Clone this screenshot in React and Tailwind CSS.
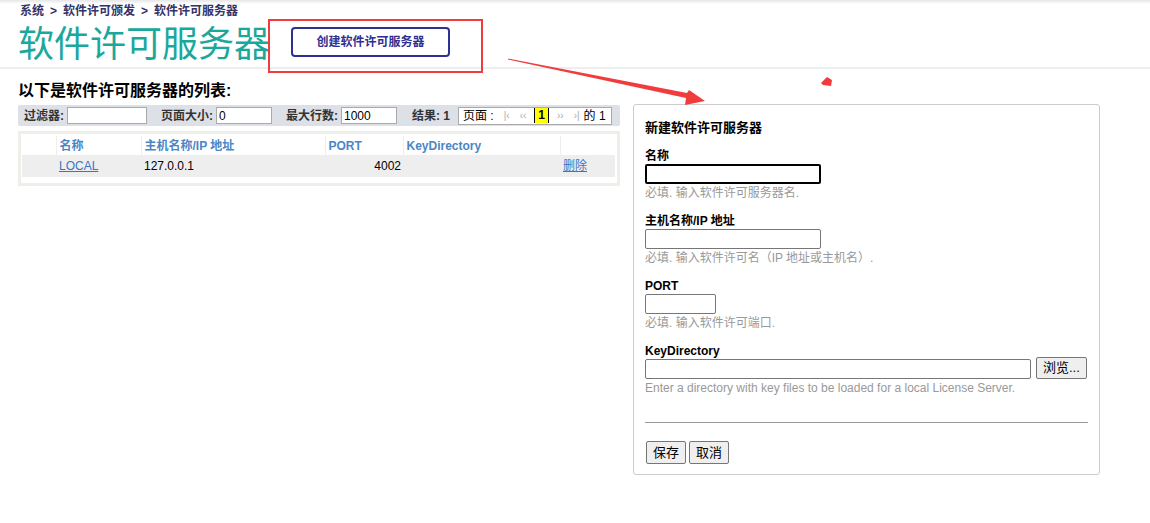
import React from 'react';

const font = { fontFamily: '"Liberation Sans", "Noto Sans CJK SC", Arial, sans-serif' };

function Field({ label, help, inputClass, focused, children }) {
  return (
    <div className="mt-[13px]">
      <div className="text-[12px] font-bold text-black leading-[15px]">{label}</div>
      <div className="flex items-center gap-[5px]">
        <input
          className={`h-[20px] bg-white rounded-[2px] outline-none ${
            focused ? 'border-2 border-black' : 'border border-[#767676]'
          } ${inputClass}`}
        />
        {children}
      </div>
      <div className="text-[12px] text-[#999] leading-[16px] mt-[1px]">{help}</div>
    </div>
  );
}

export default function App() {
  return (
    <div className="relative w-[1150px] h-[523px] bg-white overflow-hidden text-black" style={font}>
      {/* top shadow */}
      <div className="h-[4px] bg-gradient-to-b from-[#e6e6e6] to-white" />

      {/* header */}
      <div className="pl-[20px] h-[14px] text-[12px] font-bold text-[#333366] leading-[14px] flex">
        <span>系统</span>
        <span className="mx-[6px]">&gt;</span>
        <span>软件许可颁发</span>
        <span className="mx-[6px]">&gt;</span>
        <span>软件许可服务器</span>
      </div>
      <div className="mt-[7px] flex items-start h-[44px] pl-[18px] border-b-2 border-[#eeeeee]">
        <h1 className="text-[36px] leading-[40px] text-[#1ba89c] font-normal">软件许可服务器</h1>
        <button className="ml-[21px] mt-[2px] w-[159px] h-[30px] border-2 border-[#2e3192] rounded-[4px] text-[12px] font-bold text-[#2e3192] bg-white">
          创建软件许可服务器
        </button>
      </div>

      <div className="flex items-start">
        {/* left column */}
        <div className="pl-[18px] w-[620px]">
          <div className="mt-[12px] text-[16px] font-bold leading-[20px]">以下是软件许可服务器的列表:</div>

          {/* toolbar */}
          <div className="mt-[4px] h-[21px] bg-[#dde0e6] rounded-[2px] flex items-center text-[12px] text-[#333] pl-[6px]">
            <span className="font-bold">过滤器:</span>
            <input className="ml-[3px] w-[80px] h-[17px] bg-white border border-[#aaa]" />
            <span className="ml-[14px] font-bold">页面大小:</span>
            <input defaultValue="0" className="ml-[3px] w-[56px] h-[17px] bg-white border border-[#aaa] px-[2px] text-[12px] text-black" />
            <span className="ml-[14px] font-bold">最大行数:</span>
            <input defaultValue="1000" className="ml-[3px] w-[56px] h-[17px] bg-white border border-[#aaa] px-[2px] text-[12px] text-black" />
            <span className="ml-[15px] font-bold">结果: 1</span>
            <div className="ml-[8px] h-[18px] w-[154px] bg-white border border-[#aaa] flex items-center px-[4px] text-[12px] text-black">
              <span>页面 :</span>
              <span className="ml-[10px] text-[#aaa] text-[10px]">|‹</span>
              <span className="ml-[10px] text-[#aaa] text-[10px]">‹‹</span>
              <span className="ml-[8px] px-[3px] bg-[#ffff00] border-x border-black font-bold leading-[15px]">1</span>
              <span className="ml-[8px] text-[#aaa] text-[10px]">››</span>
              <span className="ml-[10px] text-[#aaa] text-[10px]">›|</span>
              <span className="ml-[4px]">的 1</span>
            </div>
          </div>

          {/* table */}
          <div className="mt-[5px] border-[3px] border-[#efefe9] pt-[2px] pl-[1px] pr-[2px] pb-[6px]">
            <table className="w-full border-collapse text-[12px]">
              <thead>
                <tr className="h-[19px] text-left text-[#4a86c5]">
                  <th className="w-[34px] border-r border-[#eee]"></th>
                  <th className="w-[85px] pl-[3px] border-r border-[#eee] font-bold">名称</th>
                  <th className="w-[184px] pl-[3px] border-r border-[#eee] font-bold">主机名称/IP 地址</th>
                  <th className="w-[78px] pl-[3px] border-r border-[#eee] font-bold">PORT</th>
                  <th className="w-[157px] pl-[3px] border-r border-[#eee] font-bold">KeyDirectory</th>
                  <th></th>
                </tr>
              </thead>
              <tbody>
                <tr className="h-[22px] bg-[#eeeeee]">
                  <td></td>
                  <td className="pl-[3px]">
                    <a href="#" className="text-[#3a75c4] underline">LOCAL</a>
                  </td>
                  <td className="pl-[3px]">127.0.0.1</td>
                  <td className="pr-[2px] text-right">4002</td>
                  <td></td>
                  <td className="pl-[3px]">
                    <a href="#" className="text-[#3a75c4] underline">删除</a>
                  </td>
                </tr>
              </tbody>
            </table>
          </div>
        </div>

        {/* right form panel */}
        <div className="ml-[13px] mt-[35px] w-[467px] h-[371px] border border-[#cccccc] rounded-[3px] px-[11px]">
          <div className="mt-[15px] text-[13px] font-bold leading-[16px]">新建软件许可服务器</div>
          <Field label="名称" help="必填. 输入软件许可服务器名." inputClass="w-[176px]" focused />
          <Field label="主机名称/IP 地址" help="必填. 输入软件许可名（IP 地址或主机名）." inputClass="w-[176px]" />
          <Field label="PORT" help="必填. 输入软件许可端口." inputClass="w-[71px]" />
          <Field
            label="KeyDirectory"
            help="Enter a directory with key files to be loaded for a local License Server."
            inputClass="w-[386px]"
          >
            <button className="-mt-[3px] h-[22px] px-[6px] border border-[#767676] rounded-[2px] bg-[#efefef] text-[13px]">
              浏览...
            </button>
          </Field>
          <div className="mt-[26px] border-t border-[#999]" />
          <div className="mt-[18px] flex gap-[3px] pl-[1px]">
            <button className="h-[23px] px-[6px] border border-[#767676] rounded-[2px] bg-[#efefef] text-[13px]">保存</button>
            <button className="h-[23px] px-[6px] border border-[#767676] rounded-[2px] bg-[#efefef] text-[13px]">取消</button>
          </div>
        </div>
      </div>

      {/* annotations */}
      <div className="absolute left-[268px] top-[19px] w-[215px] h-[54px] border-2 border-[#f03c3c]" />
      <svg className="absolute left-0 top-0" width="1150" height="523" viewBox="0 0 1150 523">
        <polygon points="508,58.5 687,93 689,90 705,101 685,105 686,98 508,59.5" fill="#f03c3c" />
        <polygon points="821,83 827,77 832,80 831,86 823,85" fill="#f03c3c" />
      </svg>
    </div>
  );
}
